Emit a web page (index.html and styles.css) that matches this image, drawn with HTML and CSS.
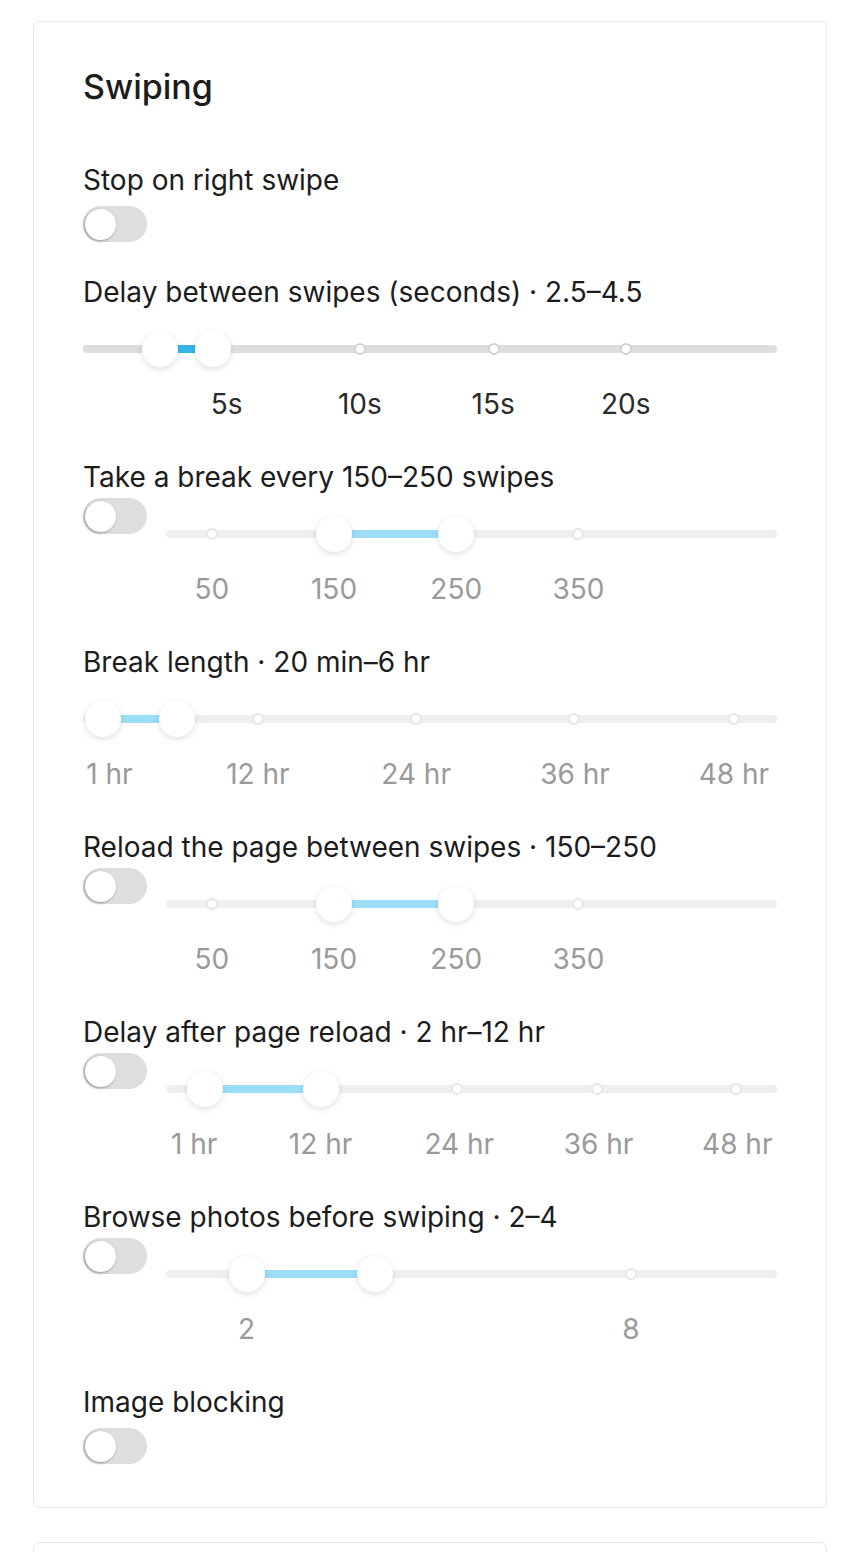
FILE: index.html
```html
<!DOCTYPE html>
<html lang="en">
<head>
    <meta charset="UTF-8">
    <meta name="viewport" content="width=device-width, initial-scale=1.0">
    <title>Swiping settings</title>
    <link rel="stylesheet" href="styles.css">
</head>
<body>
    <div class="page">
        <div class="card">
            <h2 class="card-title">Swiping</h2>

            <div class="field">
                <p class="field-label">Stop on right swipe</p>
                <span class="switch"></span>
            </div>

            <div class="field field-slider">
                <p class="field-label">Delay between swipes (seconds) · 2.5–4.5</p>
                <div class="slider is-active">
                    <div class="rail">
                        <span class="fill" style="left:11.1%;width:7.6%"></span>
                        <span class="dot" style="left:39.9%"></span>
                        <span class="dot" style="left:59.2%"></span>
                        <span class="dot" style="left:78.2%"></span>
                        <span class="handle" style="left:11.1%"></span>
                        <span class="handle" style="left:18.7%"></span>
                    </div>
                    <div class="marks">
                        <span class="mark" style="left:20.7%">5s</span>
                        <span class="mark" style="left:39.9%">10s</span>
                        <span class="mark" style="left:59.1%">15s</span>
                        <span class="mark" style="left:78.2%">20s</span>
                    </div>
                </div>
            </div>

            <div class="field field-slider">
                <p class="field-label">Take a break every 150–250 swipes</p>
                <div class="field-row">
                    <span class="switch"></span>
                    <div class="slider">
                        <div class="rail">
                            <span class="fill" style="left:27.5%;width:20%"></span>
                            <span class="dot" style="left:7.5%"></span>
                            <span class="dot" style="left:67.5%"></span>
                            <span class="handle" style="left:27.5%"></span>
                            <span class="handle" style="left:47.5%"></span>
                        </div>
                        <div class="marks">
                            <span class="mark" style="left:7.5%">50</span>
                            <span class="mark" style="left:27.5%">150</span>
                            <span class="mark" style="left:47.5%">250</span>
                            <span class="mark" style="left:67.5%">350</span>
                        </div>
                    </div>
                </div>
            </div>

            <div class="field field-slider">
                <p class="field-label">Break length · 20 min–6 hr</p>
                <div class="slider">
                    <div class="rail">
                        <span class="fill" style="left:2.9%;width:10.6%"></span>
                        <span class="dot" style="left:25.2%"></span>
                        <span class="dot" style="left:48%"></span>
                        <span class="dot" style="left:70.7%"></span>
                        <span class="dot" style="left:93.8%"></span>
                        <span class="handle" style="left:2.9%"></span>
                        <span class="handle" style="left:13.5%"></span>
                    </div>
                    <div class="marks">
                        <span class="mark" style="left:3.8%">1 hr</span>
                        <span class="mark" style="left:25.2%">12 hr</span>
                        <span class="mark" style="left:48%">24 hr</span>
                        <span class="mark" style="left:70.9%">36 hr</span>
                        <span class="mark" style="left:93.8%">48 hr</span>
                    </div>
                </div>
            </div>

            <div class="field field-slider">
                <p class="field-label">Reload the page between swipes · 150–250</p>
                <div class="field-row">
                    <span class="switch"></span>
                    <div class="slider">
                        <div class="rail">
                            <span class="fill" style="left:27.5%;width:20%"></span>
                            <span class="dot" style="left:7.5%"></span>
                            <span class="dot" style="left:67.5%"></span>
                            <span class="handle" style="left:27.5%"></span>
                            <span class="handle" style="left:47.5%"></span>
                        </div>
                        <div class="marks">
                            <span class="mark" style="left:7.5%">50</span>
                            <span class="mark" style="left:27.5%">150</span>
                            <span class="mark" style="left:47.5%">250</span>
                            <span class="mark" style="left:67.5%">350</span>
                        </div>
                    </div>
                </div>
            </div>

            <div class="field field-slider">
                <p class="field-label">Delay after page reload · 2 hr–12 hr</p>
                <div class="field-row">
                    <span class="switch"></span>
                    <div class="slider">
                        <div class="rail">
                            <span class="fill" style="left:6.4%;width:18.9%"></span>
                            <span class="dot" style="left:47.7%"></span>
                            <span class="dot" style="left:70.6%"></span>
                            <span class="dot" style="left:93.3%"></span>
                            <span class="handle" style="left:6.4%"></span>
                            <span class="handle" style="left:25.3%"></span>
                        </div>
                        <div class="marks">
                            <span class="mark" style="left:4.6%">1 hr</span>
                            <span class="mark" style="left:25.3%">12 hr</span>
                            <span class="mark" style="left:48%">24 hr</span>
                            <span class="mark" style="left:70.8%">36 hr</span>
                            <span class="mark" style="left:93.5%">48 hr</span>
                        </div>
                    </div>
                </div>
            </div>

            <div class="field field-slider">
                <p class="field-label">Browse photos before swiping · 2–4</p>
                <div class="field-row">
                    <span class="switch"></span>
                    <div class="slider">
                        <div class="rail">
                            <span class="fill" style="left:13.2%;width:21%"></span>
                            <span class="dot" style="left:76.1%"></span>
                            <span class="handle" style="left:13.2%"></span>
                            <span class="handle" style="left:34.2%"></span>
                        </div>
                        <div class="marks">
                            <span class="mark" style="left:13.2%">2</span>
                            <span class="mark" style="left:76.1%">8</span>
                        </div>
                    </div>
                </div>
            </div>

            <div class="field">
                <p class="field-label">Image blocking</p>
                <span class="switch"></span>
            </div>
        </div>

        <div class="card card-next"></div>
    </div>
</body>
</html>
```

FILE: styles.css
```css
body {
    margin: 0;
    background-color: #fff;
    font-family: "Inter", "Liberation Sans", sans-serif;
    color: #1c1c1c;
}

.page {
    padding: 21px 33px 0;
}

.card {
    background-color: #fff;
    border: 1px solid #e9e9e9;
    border-radius: 6px;
    padding: 45px 49px 43px;
}

.card-next {
    margin-top: 34px;
    height: 60px;
    padding: 0;
}

.card-title {
    margin: 0 0 55px;
    font-size: 34px;
    line-height: 40px;
    font-weight: 500;
}

.field {
    margin-bottom: 32px;
}

.field-slider {
    margin-bottom: 39px;
}

.field:last-child {
    margin-bottom: 0;
}

.field-label {
    margin: 0;
    font-size: 28px;
    line-height: 36px;
}

.field-row {
    display: flex;
    align-items: flex-start;
    gap: 19px;
}

.field .switch {
    margin-top: 8px;
}

.field-row .switch {
    margin-top: 3px;
    flex-shrink: 0;
}

/* toggle (always off here) */
.switch {
    display: block;
    position: relative;
    width: 64px;
    height: 36px;
    border-radius: 18px;
    background-color: #dedede;
}

.switch::after {
    content: "";
    position: absolute;
    left: 2px;
    top: 3px;
    width: 31px;
    height: 31px;
    border-radius: 50%;
    background-color: #fff;
    box-shadow: -1px 1px 3px rgba(0, 0, 0, 0.35);
}

/* range slider */
.slider {
    flex: 1;
    padding-top: 35px;
}

.rail {
    position: relative;
    height: 8px;
    border-radius: 4px;
    background-color: #efefef;
}

.fill {
    position: absolute;
    top: 0;
    height: 100%;
    background-color: #9bdff7;
}

.dot {
    position: absolute;
    top: 50%;
    width: 8px;
    height: 8px;
    border: 2px solid #e6e6e6;
    border-radius: 50%;
    background-color: #fff;
    transform: translate(-50%, -50%);
}

.handle {
    position: absolute;
    top: 50%;
    width: 36px;
    height: 36px;
    border-radius: 50%;
    background-color: #fff;
    box-shadow: 0 2px 6px rgba(0, 0, 0, 0.13);
    transform: translate(-50%, -50%);
}

.marks {
    position: relative;
    height: 32px;
    margin-top: 35px;
}

.mark {
    position: absolute;
    top: 0;
    font-size: 28px;
    line-height: 32px;
    color: #9a9a9a;
    white-space: nowrap;
    transform: translateX(-50%);
}

.slider.is-active .rail {
    background-color: #dedede;
}

.slider.is-active .fill {
    background-color: #38b4e6;
}

.slider.is-active .dot {
    border-color: #d2d2d2;
}

.slider.is-active .mark {
    color: #2a2a2a;
}
```
